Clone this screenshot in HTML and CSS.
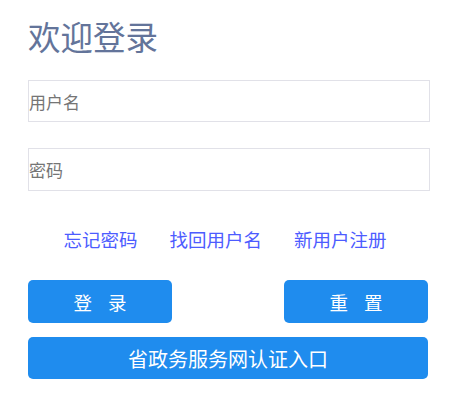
FILE: index.html
```html
<!DOCTYPE html>
<html lang="zh">
<head>
<meta charset="utf-8">
<title>欢迎登录</title>
<link rel="stylesheet" href="styles.css">
</head>
<body>
<div class="login">
  <h1 class="title">欢迎登录</h1>
  <input class="field field-user" type="text" placeholder="用户名">
  <input class="field field-pass" type="password" placeholder="密码">
  <div class="links">
    <a class="link" href="#">忘记密码</a>
    <a class="link" href="#">找回用户名</a>
    <a class="link" href="#">新用户注册</a>
  </div>
  <div class="actions">
    <button class="btn btn-half" type="button">登&nbsp;录</button>
    <button class="btn btn-half" type="button">重&nbsp;置</button>
  </div>
  <button class="btn btn-full" type="button">省政务服务网认证入口</button>
</div>
</body>
</html>
```
FILE: styles.css
```css
* { box-sizing: border-box; }
html, body {
  margin: 0;
  padding: 0;
  background: #ffffff;
  font-family: "Noto Sans CJK SC", "Noto Sans", sans-serif;
}
.login {
  width: 402px;
  margin-left: 28px;
  display: flex;
  flex-direction: column;
}
.title {
  margin: 14px 0 0 0;
  font-size: 32.5px;
  line-height: 44px;
  font-weight: 400;
  color: #63749a;
}
.field {
  display: block;
  width: 402px;
  height: 42px;
  margin: 22px 0 0 0;
  padding: 0;
  border: 1px solid #e1e1e8;
  border-radius: 0;
  font-family: inherit;
  font-size: 17px;
  color: #333;
  outline: none;
  background: #fff;
}
.field-pass {
  height: 43px;
  margin-top: 26px;
}
.field::placeholder { color: #757575; }
.links {
  display: flex;
  justify-content: center;
  gap: 32px;
  margin: 36px 0 0 -8px;
  line-height: 24px;
}
.link {
  font-size: 18.5px;
  color: #4d5cff;
  text-decoration: none;
}
.actions {
  display: flex;
  justify-content: space-between;
  width: 400px;
  margin-top: 29px;
}
.btn {
  border: none;
  border-radius: 5px;
  background: #1f8cee;
  color: #ffffff;
  font-family: inherit;
  font-size: 18.5px;
  padding: 0;
  cursor: pointer;
}
.btn-half {
  width: 144px;
  height: 43px;
  letter-spacing: 6px;
  text-indent: 6px;
}
.btn-full {
  width: 400px;
  height: 42px;
  margin-top: 14px;
  font-size: 20px;
}
```
